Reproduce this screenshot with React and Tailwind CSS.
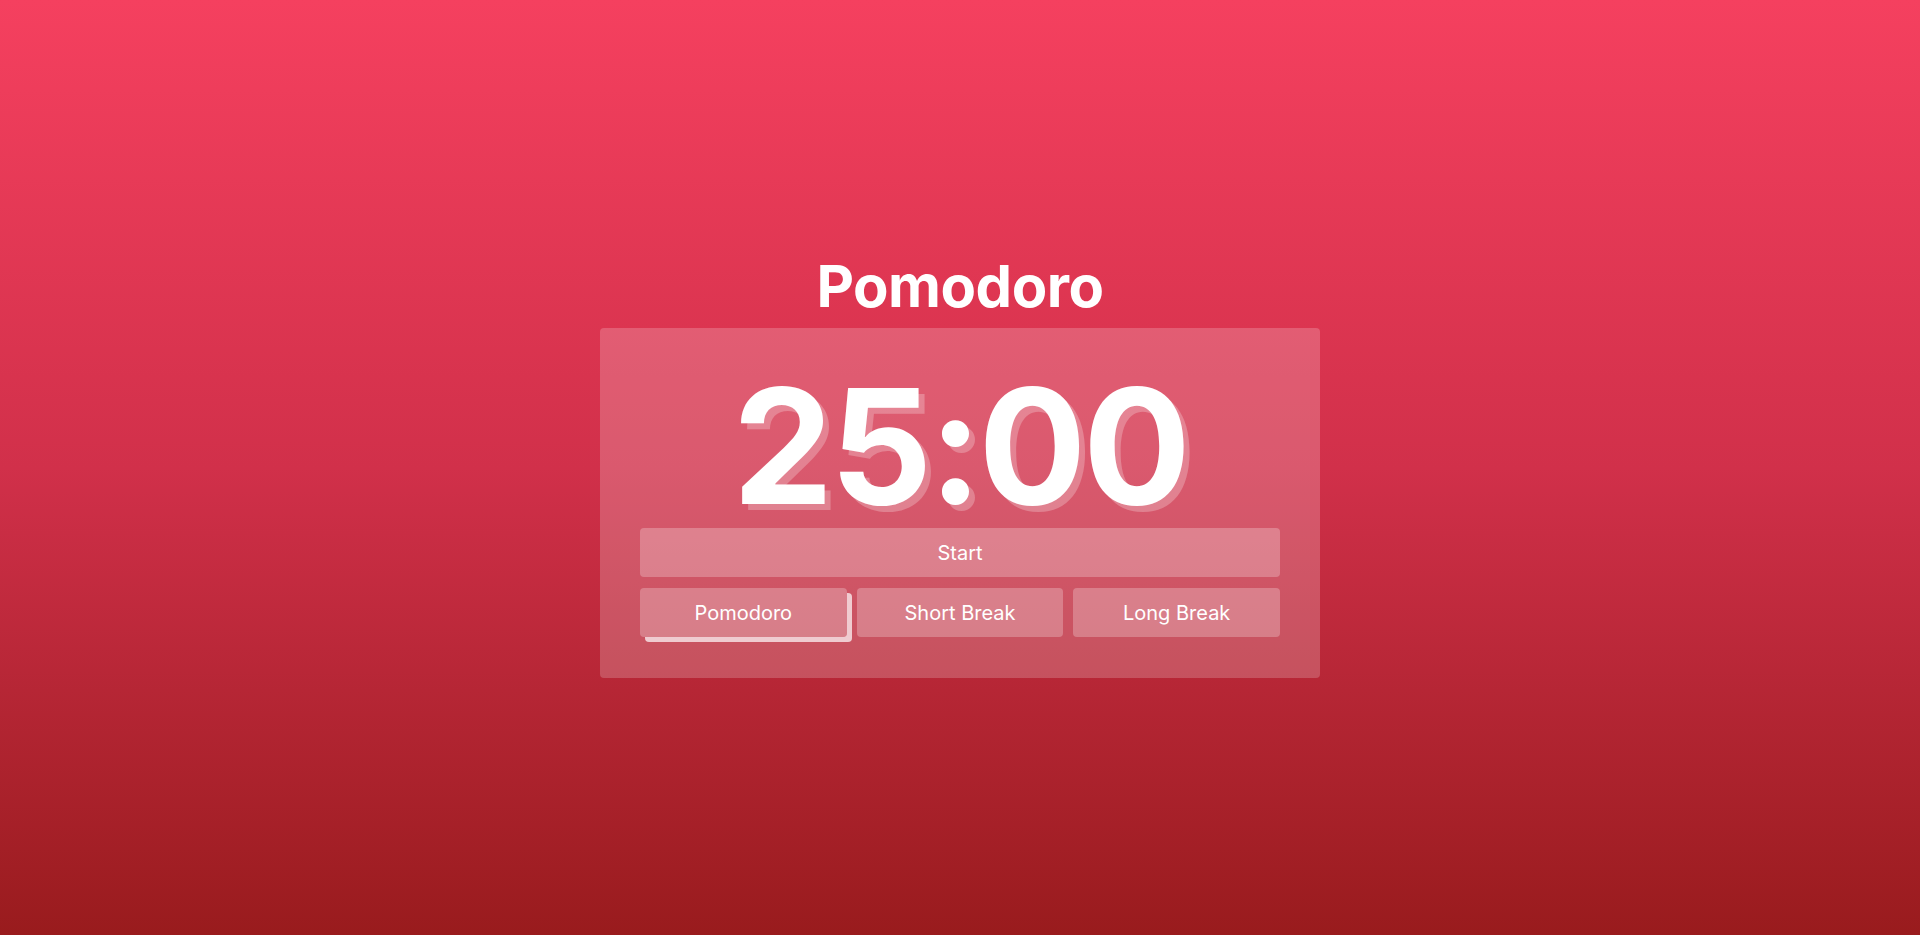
export default function App() {
  return (
    <div
      className="min-h-screen w-full flex flex-col items-center justify-center bg-gradient-to-b from-[#f5405f] via-[#d1304a] to-[#991b1d] text-white"
      style={{ fontFamily: "Inter, 'Noto Sans', sans-serif" }}
    >
      <h1 className="text-[58px] font-bold leading-none tracking-[-0.5px] mb-[13px]">Pomodoro</h1>
      <div className="w-[720px] h-[350px] rounded bg-white/20 pt-[38px] px-10 flex flex-col">
        <div className="text-[160px] font-bold leading-none text-center mb-[2px] tracking-[-3.5px] [text-shadow:6px_6px_0_rgba(255,255,255,0.25)]">
          25:00
        </div>
        <button className="h-[49px] w-full rounded bg-white/25 text-xl">Start</button>
        <div className="mt-[11px] grid grid-cols-3 gap-[10px]">
          <button className="h-[49px] rounded bg-white/25 text-xl shadow-[5px_5px_0_rgba(255,255,255,0.7)]">Pomodoro</button>
          <button className="h-[49px] rounded bg-white/25 text-xl">Short Break</button>
          <button className="h-[49px] rounded bg-white/25 text-xl">Long Break</button>
        </div>
      </div>
    </div>
  );
}
